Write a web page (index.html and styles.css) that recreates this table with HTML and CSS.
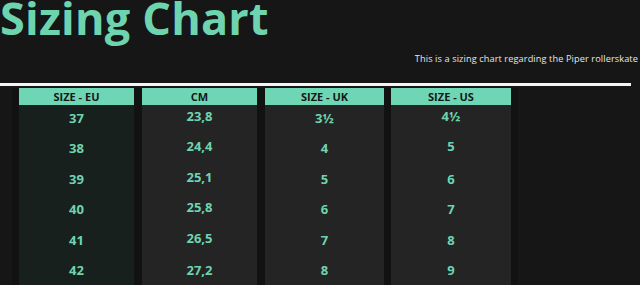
FILE: index.html
```html
<!DOCTYPE html>
<html lang="en">
<head>
<meta charset="utf-8">
<title>Sizing Chart</title>
<link rel="stylesheet" href="styles.css">
</head>
<body>
  <h1 class="title">Sizing Chart</h1>
  <p class="subtitle">This is a sizing chart regarding the Piper rollerskate</p>
  <div class="rule"></div>
  <div class="chart">
    <div class="col col-eu">
      <div class="head">SIZE - EU</div>
      <div class="cell">37</div>
      <div class="cell">38</div>
      <div class="cell">39</div>
      <div class="cell">40</div>
      <div class="cell">41</div>
      <div class="cell">42</div>
    </div>
    <div class="col col-cm">
      <div class="head">CM</div>
      <div class="cell up">23,8</div>
      <div class="cell up">24,4</div>
      <div class="cell up">25,1</div>
      <div class="cell up">25,8</div>
      <div class="cell up">26,5</div>
      <div class="cell">27,2</div>
    </div>
    <div class="col col-uk">
      <div class="head">SIZE - UK</div>
      <div class="cell">3½</div>
      <div class="cell">4</div>
      <div class="cell">5</div>
      <div class="cell">6</div>
      <div class="cell">7</div>
      <div class="cell">8</div>
    </div>
    <div class="col col-us">
      <div class="head">SIZE - US</div>
      <div class="cell up">4½</div>
      <div class="cell up">5</div>
      <div class="cell">6</div>
      <div class="cell">7</div>
      <div class="cell">8</div>
      <div class="cell">9</div>
    </div>
  </div>
</body>
</html>
```
FILE: styles.css
```css
html, body {
  margin: 0;
  padding: 0;
  background: #161616;
  overflow: hidden;
}
body {
  font-family: "Open Sans", "Noto Sans", sans-serif;
  width: 640px;
  height: 285px;
}
.title {
  margin: 0;
  padding-top: 1px;
  font-size: 45px;
  line-height: 34px;
  font-weight: 700;
  letter-spacing: 0.2px;
  color: #6ed4b0;
}
.subtitle {
  margin: 17px 0 0 0;
  font-size: 9.2px;
  line-height: 14px;
  color: #e6e6e6;
  text-align: right;
  padding-right: 2px;
  letter-spacing: 0.1px;
}
.rule {
  margin-top: 17px;
  width: 631px;
  height: 3px;
  background: #f4f4f4;
}
.chart {
  margin: 2px 0 0 12px;
  width: 506px;
  padding: 0 7px;
  box-sizing: border-box;
  background: #121212;
  display: flex;
  gap: 8px;
  height: 210px;
}
.col {
  background: #242424;
  display: flex;
  flex-direction: column;
}
.col-eu { width: 115px; background: #18201e; }
.col-cm { width: 115px; }
.col-uk { width: 119px; margin-right: -1px; }
.col-us { width: 120px; }
.head {
  height: 17px;
  background: #6ed6b4;
  color: #161616;
  font-size: 11px;
  font-weight: 700;
  line-height: 17px;
  text-align: center;
}
.cell {
  height: 30.4px;
  box-sizing: border-box;
  padding-top: 5px;
  line-height: 16px;
  font-size: 13px;
  font-weight: 700;
  color: #6ed4b0;
  text-align: center;
}
.cell.up { padding-top: 3px; }
```
